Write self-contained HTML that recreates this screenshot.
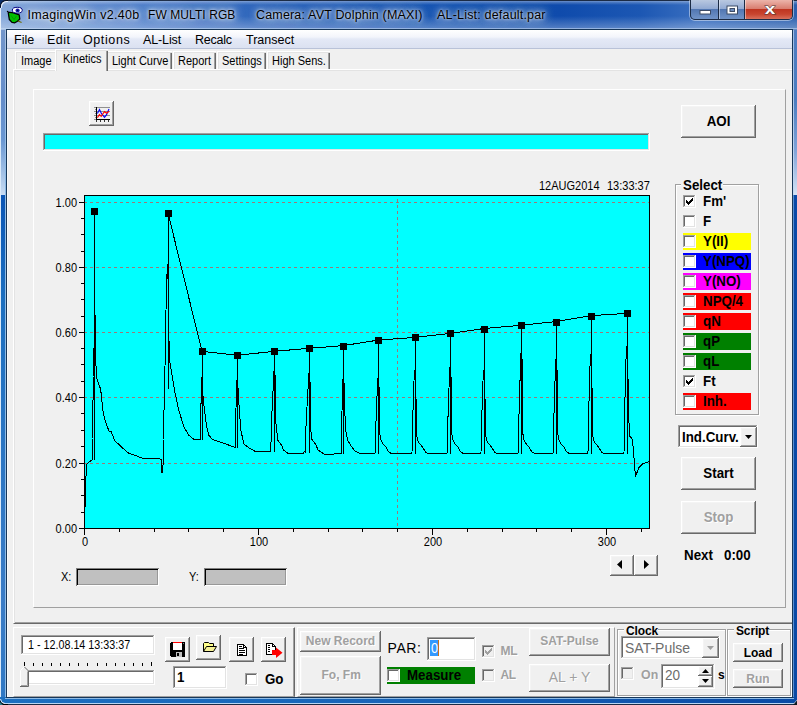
<!DOCTYPE html>
<html lang="en">
<head>
<meta charset="utf-8">
<title>ImagingWin v2.40b</title>
<style>
html,body{margin:0;padding:0}
body{width:797px;height:705px;overflow:hidden;position:relative;background:#f0f0f0;font-family:"Liberation Sans",sans-serif;font-size:12px;color:#000}
div,span.t,svg{position:absolute;box-sizing:border-box}
.t{line-height:1;white-space:pre}
.btn{background:#f0f0f0;box-shadow:inset -1px -1px 0 #696969,inset 1px 1px 0 #fff,inset -2px -2px 0 #a0a0a0,inset 2px 2px 0 #f4f4f4}
.sunk{background:#fff;box-shadow:inset -1px -1px 0 #fff,inset 1px 1px 0 #a0a0a0,inset -2px -2px 0 #e3e3e3,inset 2px 2px 0 #696969}
.cb{width:13px;height:13px}
.dis{background:#f0f0f0}
.grp{border:1px solid #a0a0a0;box-shadow:1px 1px 0 #fff,inset 1px 1px 0 #fff}
.gl{background:#f0f0f0;padding:0}
.gray{color:#a0a0a0;text-shadow:1px 1px 0 #fff}
.tab{background:#f0f0f0;border-left:1px solid #fff;border-top:1px solid #fff;box-shadow:inset 1px 1px 0 #e3e3e3,inset -1px 0 0 #696969,inset -2px 0 0 #a0a0a0}
.ttl{text-shadow:0 0 3px rgba(255,255,255,.9),0 0 7px rgba(255,255,255,.85),0 0 12px rgba(255,255,255,.7),0 0 18px rgba(255,255,255,.55),0 0 24px rgba(255,255,255,.4)}
</style>
</head>
<body>
<!-- window frame -->
<div class="" style="left:0px;top:0px;width:797px;height:30px;background:linear-gradient(to bottom,rgba(255,255,255,.55) 0,rgba(255,255,255,.25) 2px,rgba(255,255,255,0) 5px,rgba(255,255,255,0) 16px,rgba(255,255,255,.28) 28px),linear-gradient(to right,#86a8da 0,#6b95d3 60px,#4a7dca 140px,#2b63bb 260px,#1553b3 420px,#0f4bac 560px,#1c57b3 640px,#3a6fc0 700px,#2b5fae 797px);"></div>
<div class="" style="left:0px;top:28px;width:797px;height:1px;background:rgba(200,220,245,.55)"></div>
<div class="" style="left:0px;top:30px;width:7px;height:668px;background:linear-gradient(to bottom,#7396cb 0,#648dca 70px,#6a97d2 110px,#9dbde4 140px,#c8dcf3 164.9px,#0a55b5 165px,#1c6fc0 270px,#3a7cc6 570px,#2f78c4 100%)"></div>
<div class="" style="left:0px;top:2px;width:1px;height:696px;background:linear-gradient(to bottom,#eef3fa 0,#d9e9f9 120px)"></div>
<div class="" style="left:5px;top:30px;width:1px;height:668px;background:linear-gradient(to bottom,#a9c0e0 0,#8ebbe6 150px)"></div>
<div class="" style="left:6px;top:29px;width:1px;height:669px;background:#17375a"></div>
<div class="" style="left:792px;top:30px;width:5px;height:668px;background:linear-gradient(to bottom,#4f7cc0 0,#4a7dc0 70px,#7fa3d8 120px,#d5e3f5 164.9px,#0a4aa8 165px,#0a4aa5 100%)"></div>
<div class="" style="left:793px;top:30px;width:1px;height:668px;background:linear-gradient(to bottom,#9fbbe2 0,#c5d8f0 164.9px,#5b8fd0 165px,#5b8fd0 100%)"></div>
<div class="" style="left:792px;top:29px;width:1px;height:669px;background:#17375a"></div>
<div class="" style="left:7px;top:30px;width:1px;height:667px;background:#fafafa"></div>
<div class="" style="left:6px;top:29px;width:787px;height:1px;background:#17375a"></div>
<div class="" style="left:0px;top:697px;width:797px;height:8px;background:linear-gradient(to right,#1c6fc0 0,#1864b8 50%,#0a4aa5 100%)"></div>
<div class="" style="left:6px;top:697px;width:787px;height:1px;background:#17375a"></div>
<div class="" style="left:5px;top:698px;width:789px;height:1px;background:#8ebbe6"></div>
<div class="" style="left:0px;top:703px;width:797px;height:1px;background:#b9d6f3"></div>
<div class="" style="left:0px;top:704px;width:797px;height:1px;background:#1b2b45"></div>
<div class="" style="left:0px;top:0px;width:797px;height:1px;background:#1b2b45"></div>
<svg style="left:0;top:0" width="8" height="8" viewBox="0 0 8 8"><path d="M0 0H8V1H6A5 5 0 0 0 1 6V8H0Z" fill="#0b2f6b"/><path d="M0 7V6A6 6 0 0 1 6 0H8V1H6.500A5.500 5.500 0 0 0 1 6.500V7Z" fill="#0a1020"/><path d="M1 8V6.500A5.500 5.500 0 0 1 6.500 1H8V2H7A5 5 0 0 0 2 7V8Z" fill="#e6eefa"/></svg>
<svg style="left:0;top:697px" width="8" height="8" viewBox="0 697 8 8"><path d="M0 705V699A5 5 0 0 0 5 704H8V705Z" fill="#000"/><path d="M0 705V702L3 705Z" fill="#2a7a8a"/><path d="M0.500 699A5 5 0 0 0 5 703.500" stroke="#dbe9f8" stroke-width="1" fill="none"/></svg>
<svg style="left:4px;top:3px" width="24" height="23" viewBox="4 3 24 23">
<path d="M8.200 12.200L13.500 12.800L19.200 14.800L19.800 19L17.500 21.200L14.800 22.800L12 22.400L9.300 19.500Z" fill="#00c000" stroke="#000" stroke-width="1.300" stroke-linejoin="round"/>
<path d="M11 15.500L14 19.500L16.500 16" stroke="#009000" stroke-width=".8" fill="none"/>
<path d="M18 21L21.600 22.600" stroke="#6b6b00" stroke-width="1.100"/>
<circle cx="7.500" cy="11.400" r=".7" fill="#000"/>
<ellipse cx="17.300" cy="10.200" rx="5" ry="2.900" fill="#fff" stroke="#000080" stroke-width="1"/>
<ellipse cx="17.600" cy="10.400" rx="2.100" ry="1.900" fill="#1a1ab0"/>
<circle cx="17.600" cy="10.400" r=".8" fill="#000040"/>
</svg>
<!-- title -->
<span class="t ttl" style="left:27.5px;top:9px;font-size:12.5px;letter-spacing:0.29px;">ImagingWin v2.40b</span>
<span class="t ttl" style="left:148px;top:9px;font-size:12px;letter-spacing:0.08px;">FW MULTI RGB</span>
<span class="t ttl" style="left:256px;top:9px;font-size:12.5px;letter-spacing:0.17px;">Camera: AVT Dolphin (MAXI)</span>
<span class="t ttl" style="left:437px;top:9px;font-size:12.5px;letter-spacing:0.19px;">AL-List: default.par</span>
<!-- caption buttons -->
<div class="" style="left:690px;top:0px;width:103px;height:20px;border-radius:0 0 5px 5px;border:1px solid #1b2b45;border-top:none;box-shadow:0 0 0 1px rgba(255,255,255,.45);background:linear-gradient(to bottom,#b9c8e0 0,#93abd3 45%,#5277b2 50%,#7194c8 100%)"></div>
<div class="" style="left:745px;top:0px;width:47px;height:19px;border-radius:0 0 4px 0;background:linear-gradient(to bottom,#ecb4aa 0,#d97e70 45%,#bf3521 50%,#c9452f 75%,#d8705c 100%)"></div>
<div class="" style="left:718px;top:0px;width:1px;height:19px;background:#1b2b45"></div>
<div class="" style="left:719px;top:0px;width:1px;height:19px;background:rgba(255,255,255,.45)"></div>
<div class="" style="left:744px;top:0px;width:1px;height:19px;background:#1b2b45"></div>
<div class="" style="left:745px;top:0px;width:1px;height:19px;background:rgba(255,255,255,.45)"></div>
<svg style="left:690px;top:0" width="103" height="20" viewBox="690 0 103 20">
<rect x="700" y="10.5" width="10.5" height="3.5" fill="#fff" stroke="#3d4c66" stroke-width="1"/>
<rect x="727" y="6" width="10.5" height="8" fill="#fff" stroke="#3d4c66" stroke-width="1"/>
<rect x="730" y="8.5" width="4.500" height="3" fill="#6f8fc0" stroke="#3d4c66" stroke-width="1"/>
<text transform="translate(770 14.2) scale(1.22 1)" font-family="Liberation Sans, sans-serif" font-weight="bold" font-size="15.500" text-anchor="middle" fill="#fff" stroke="#4a3636" stroke-width=".9" paint-order="stroke">x</text>
</svg>
<!-- menu bar -->
<div class="" style="left:7px;top:30px;width:785px;height:19px;background:linear-gradient(to bottom,#fff 0,#f3f5fb 7px,#e4e9f6 9px,#dbe1f1 18px);border-bottom:1px solid #b9c2d8"></div>
<span class="t" style="left:14px;top:34px;font-size:12.5px;">File</span>
<span class="t" style="left:47px;top:34px;font-size:12.5px;letter-spacing:0.5px;">Edit</span>
<span class="t" style="left:83px;top:34px;font-size:12.5px;letter-spacing:0.6px;">Options</span>
<span class="t" style="left:143px;top:34px;font-size:12.5px;letter-spacing:-0.13px;">AL-List</span>
<span class="t" style="left:195px;top:34px;font-size:12.5px;letter-spacing:-0.25px;">Recalc</span>
<span class="t" style="left:246px;top:34px;font-size:12.5px;">Transect</span>
<!-- tab control -->
<div class="" style="left:13px;top:69px;width:779px;height:555px;border-left:1px solid #fff;border-top:1px solid #fff;border-bottom:1px solid #696969;box-shadow:inset 1px 1px 0 #e3e3e3,inset 0 -1px 0 #a0a0a0"></div>
<div class="tab" style="left:15px;top:51px;width:42px;height:18px;"></div>
<span class="t" style="left:21px;top:55px;font-size:12px;transform:scaleX(0.917);transform-origin:0 0;">Image</span>
<div class="tab" style="left:106px;top:51px;width:66px;height:18px;"></div>
<span class="t" style="left:112px;top:55px;font-size:12px;transform:scaleX(0.917);transform-origin:0 0;">Light Curve</span>
<div class="tab" style="left:173px;top:51px;width:43px;height:18px;"></div>
<span class="t" style="left:178px;top:55px;font-size:12px;transform:scaleX(0.917);transform-origin:0 0;">Report</span>
<div class="tab" style="left:217px;top:51px;width:49px;height:18px;"></div>
<span class="t" style="left:222px;top:55px;font-size:12px;transform:scaleX(0.917);transform-origin:0 0;">Settings</span>
<div class="tab" style="left:267px;top:51px;width:63px;height:18px;"></div>
<span class="t" style="left:272px;top:55px;font-size:12px;transform:scaleX(0.917);transform-origin:0 0;">High Sens.</span>
<div class="tab" style="left:55px;top:49px;width:53px;height:22px;box-shadow:inset 1px 1px 0 #e3e3e3,inset -1px 0 0 #696969,inset -2px 0 0 #a0a0a0"></div>
<div class="" style="left:57px;top:69px;width:49px;height:2px;background:#f0f0f0"></div>
<span class="t" style="left:63px;top:53px;font-size:12px;transform:scaleX(0.917);transform-origin:0 0;">Kinetics</span>
<div class="" style="left:33px;top:89px;width:753px;height:519px;border-left:1px solid #fff;border-top:1px solid #fff;border-right:1px solid #a0a0a0;border-bottom:1px solid #a0a0a0"></div>
<!-- chart toolbar -->
<div class="btn" style="left:89px;top:101px;width:25px;height:25px;"></div>
<svg style="left:93px;top:105px" width="18" height="18" viewBox="93 105 18 18">
<path d="M94 107.500H110M94 111.500H110M94 115.500H110M95 109.500H96M95 113.500H96M95 117.500H96M94 119.500H96" stroke="#909090" stroke-width="1" fill="none" shape-rendering="crispEdges"/>
<path d="M96.500 107V120M96 119.500H110" stroke="#000" stroke-width="1" fill="none" shape-rendering="crispEdges"/>
<path d="M96.500 120v1.500M100.500 120v1.500M104.500 120v1.500M108.500 120v1.500" stroke="#333" stroke-width="1" shape-rendering="crispEdges"/>
<path d="M97.400 113.400L99.500 109.400L101.400 113.400L104.500 117.400L106.600 114.600L109 109" stroke="#00f" stroke-width="1.100" fill="none"/>
<path d="M97.400 117.600L99.500 114.600L101.200 116.300L104.500 111.500L106.600 113.200L109 111.300" stroke="#f00" stroke-width="1.100" fill="none"/>
</svg>
<div class="sunk" style="left:43px;top:133px;width:607px;height:18px;background:#0ff"></div>
<!-- kinetics chart -->
<svg style="left:40px;top:175px" width="625" height="385" viewBox="40 175 625 385">
<rect x="84" y="195" width="566" height="334" fill="#0ff"/>
<path d="M84 202.5H649" stroke="#9c7878" stroke-width="1" stroke-dasharray="3 3" shape-rendering="crispEdges"/>
<path d="M84 267.5H649" stroke="#9c7878" stroke-width="1" stroke-dasharray="3 3" shape-rendering="crispEdges"/>
<path d="M84 332.5H649" stroke="#9c7878" stroke-width="1" stroke-dasharray="3 3" shape-rendering="crispEdges"/>
<path d="M84 397.5H649" stroke="#9c7878" stroke-width="1" stroke-dasharray="3 3" shape-rendering="crispEdges"/>
<path d="M84 463.5H649" stroke="#9c7878" stroke-width="1" stroke-dasharray="3 3" shape-rendering="crispEdges"/>
<path d="M397.5 195V528" stroke="#9c7878" stroke-width="1" stroke-dasharray="3 3" stroke-dashoffset="2" shape-rendering="crispEdges"/>
<path d="M79 202.5H84M79 267.5H84M79 332.5H84M79 397.5H84M79 463.5H84M79 528.5H84M81 218.5H84M81 234.5H84M81 251.5H84M81 283.5H84M81 299.5H84M81 316.5H84M81 348.5H84M81 364.5H84M81 381.5H84M81 413.5H84M81 430.5H84M81 446.5H84M81 479.5H84M81 495.5H84M81 512.5H84M84.5 529V535M119.5 529V532M154.5 529V532M188.5 529V532M223.5 529V532M258.5 529V535M293.5 529V532M328.5 529V532M362.5 529V532M397.5 529V532M432.5 529V535M467.5 529V532M502.5 529V532M536.5 529V532M571.5 529V532M606.5 529V535M641.5 529V532" stroke="#000" stroke-width="1" shape-rendering="crispEdges"/>
<path d="M84.0 528.0 L85.0 507.0 L86.0 476.0 L87.0 464.0 L89.0 462.0 L92.0 460.0 L92.0 439.0 L93.0 400.0 L93.0 377.0 L94.0 348.0 L94.6 330.0 L95.0 313.0 L95.4 348.0 L96.4 377.0 L100.7 389.5 L103.2 412.7 L105.0 420.0 L108.9 431.0 L111.4 432.0 L114.5 440.3 L121.4 447.0 L129.0 453.5 L134.0 455.0 L142.0 458.0 L156.5 458.4 L161.5 459.4 L162.0 472.6 L163.0 465.0 L163.0 440.0 L164.5 396.0 L165.5 336.0 L166.5 284.0 L167.5 264.0 L168.7 300.0 L169.0 340.0 L169.5 360.0 L170.3 365.0 L175.0 392.7 L178.8 410.3 L183.8 426.6 L188.9 435.4 L193.9 439.2 L199.4 439.2 L200.4 439.2 L200.6 420.8 L201.0 403.5 L201.0 385.1 L201.4 377.7 L202.6 379.7 L203.0 396.1 L203.9 405.3 L206.4 425.4 L208.9 435.4 L212.7 439.7 L220.2 442.2 L226.5 444.2 L232.8 446.7 L234.5 447.2 L235.2 447.3 L235.4 427.4 L236.0 408.8 L236.3 389.0 L236.7 381.0 L237.9 383.0 L238.3 400.9 L239.0 405.3 L240.8 430.4 L244.1 444.2 L249.1 447.9 L255.4 451.5 L269.2 451.5 L270.5 451.0 L270.9 451.5 L271.2 427.9 L272.3 405.8 L273.4 382.2 L273.8 372.7 L275.0 374.7 L275.4 396.3 L275.9 422.8 L277.9 440.4 L281.7 445.4 L283.5 450.0 L288.0 453.5 L303.0 453.5 L304.3 451.7 L305.5 452.0 L305.9 428.6 L307.0 406.8 L308.3 383.4 L308.7 374.0 L309.9 376.0 L310.3 397.4 L310.6 427.9 L311.8 439.2 L315.6 444.2 L318.1 450.0 L324.4 454.2 L330.6 454.5 L340.7 453.0 L341.1 453.3 L341.3 431.3 L342.0 410.8 L342.4 388.8 L342.8 380.0 L344.0 382.0 L344.4 402.0 L345.7 430.4 L347.7 440.4 L350.7 445.4 L354.5 450.5 L359.5 453.5 L362.3 454.0 L373.3 453.5 L375.3 453.0 L375.6 430.8 L376.5 410.1 L377.3 387.9 L377.7 379.0 L378.9 381.0 L379.3 401.2 L379.5 432.0 L380.8 440.0 L382.8 443.5 L385.8 447.0 L388.8 452.0 L391.8 453.7 L399.0 454.0 L410.0 453.5 L412.0 453.0 L412.3 428.4 L413.2 405.4 L414.0 380.8 L414.4 371.0 L415.6 373.0 L416.0 395.6 L416.2 432.0 L417.5 440.0 L419.5 443.5 L422.5 447.0 L425.5 452.0 L428.5 453.7 L434.3 454.0 L445.3 453.5 L447.3 453.0 L447.6 427.5 L448.5 403.7 L449.3 378.2 L449.7 368.0 L450.9 370.0 L451.3 393.5 L451.5 432.0 L452.8 440.0 L454.8 443.5 L457.8 447.0 L460.8 452.0 L463.8 453.7 L468.0 454.0 L479.0 453.5 L481.0 453.0 L481.3 428.4 L482.2 405.4 L483.0 380.8 L483.4 371.0 L484.6 373.0 L485.0 395.6 L485.2 432.0 L486.5 440.0 L488.5 443.5 L491.5 447.0 L494.5 452.0 L497.5 453.7 L505.4 454.0 L516.4 453.5 L518.4 453.0 L518.7 423.5 L519.6 396.0 L520.4 366.5 L520.8 354.7 L522.0 356.7 L522.4 384.2 L522.6 432.0 L523.9 440.0 L525.9 443.5 L528.9 447.0 L531.9 452.0 L534.9 453.7 L540.3 454.0 L551.3 453.5 L553.3 453.0 L553.6 425.1 L554.5 399.1 L555.3 371.2 L555.7 360.0 L556.9 362.0 L557.3 387.9 L557.5 432.0 L558.8 440.0 L560.8 443.5 L563.8 447.0 L566.8 452.0 L569.8 453.7 L575.0 454.0 L586.0 453.5 L588.0 453.0 L588.3 423.5 L589.2 395.9 L590.0 366.4 L590.4 354.6 L591.6 356.6 L592.0 384.1 L592.2 432.0 L593.5 440.0 L595.5 443.5 L598.5 447.0 L601.5 452.0 L604.5 453.7 L611.0 454.0 L622.0 453.5 L624.0 453.0 L624.3 421.1 L625.2 391.3 L626.0 359.4 L626.4 346.6 L627.6 348.6 L628.0 378.5 L629.3 435.5 L632.5 439.5 L633.9 457.0 L635.5 476.7 L638.7 467.8 L642.8 463.7 L648.0 461.9 L649.0 461.7" stroke="#000" stroke-width="1" fill="none" stroke-linejoin="miter" shape-rendering="crispEdges"/>
<path d="M94.5 211.0V460M168.5 213.0V389M202.5 351.3V440M237.5 355.3V448M274.5 351.3V452M309.5 348.3V452.5M343.5 345.6V454M378.5 340.1V454M415.5 337.4V454M450.5 333.4V454M484.5 328.5V454M521.5 325.3V454M556.5 321.5V454M591.5 315.6V454M627.5 313.4V454" stroke="#000" stroke-width="1" fill="none" shape-rendering="crispEdges"/>
<path d="M168.0 213.0 L202.0 351.3 L237.3 355.3 L274.4 351.3 L309.3 348.3 L343.4 345.6 L378.3 340.1 L415.0 337.4 L450.3 333.4 L484.0 328.5 L521.4 325.3 L556.3 321.5 L591.0 315.6 L627.0 313.4" stroke="#000" stroke-width="1" fill="none" shape-rendering="crispEdges"/>
<rect x="91" y="208" width="7" height="7" fill="#000" shape-rendering="crispEdges"/>
<rect x="165" y="210" width="7" height="7" fill="#000" shape-rendering="crispEdges"/>
<rect x="199" y="348" width="7" height="7" fill="#000" shape-rendering="crispEdges"/>
<rect x="234" y="352" width="7" height="7" fill="#000" shape-rendering="crispEdges"/>
<rect x="271" y="348" width="7" height="7" fill="#000" shape-rendering="crispEdges"/>
<rect x="306" y="345" width="7" height="7" fill="#000" shape-rendering="crispEdges"/>
<rect x="340" y="343" width="7" height="7" fill="#000" shape-rendering="crispEdges"/>
<rect x="375" y="337" width="7" height="7" fill="#000" shape-rendering="crispEdges"/>
<rect x="412" y="334" width="7" height="7" fill="#000" shape-rendering="crispEdges"/>
<rect x="447" y="330" width="7" height="7" fill="#000" shape-rendering="crispEdges"/>
<rect x="481" y="326" width="7" height="7" fill="#000" shape-rendering="crispEdges"/>
<rect x="518" y="322" width="7" height="7" fill="#000" shape-rendering="crispEdges"/>
<rect x="553" y="319" width="7" height="7" fill="#000" shape-rendering="crispEdges"/>
<rect x="588" y="313" width="7" height="7" fill="#000" shape-rendering="crispEdges"/>
<rect x="624" y="310" width="7" height="7" fill="#000" shape-rendering="crispEdges"/>
<path d="M84.5 195.5H649.5V528.5H84.500Z" stroke="#000" stroke-width="1" fill="none" shape-rendering="crispEdges"/>
</svg>
<span class="t" style="left:17px;width:60px;text-align:right;top:197px;font-size:12px;transform:scaleX(0.917);transform-origin:100% 0">1.00</span>
<span class="t" style="left:17px;width:60px;text-align:right;top:262px;font-size:12px;transform:scaleX(0.917);transform-origin:100% 0">0.80</span>
<span class="t" style="left:17px;width:60px;text-align:right;top:327px;font-size:12px;transform:scaleX(0.917);transform-origin:100% 0">0.60</span>
<span class="t" style="left:17px;width:60px;text-align:right;top:392px;font-size:12px;transform:scaleX(0.917);transform-origin:100% 0">0.40</span>
<span class="t" style="left:17px;width:60px;text-align:right;top:458px;font-size:12px;transform:scaleX(0.917);transform-origin:100% 0">0.20</span>
<span class="t" style="left:17px;width:60px;text-align:right;top:523px;font-size:12px;transform:scaleX(0.917);transform-origin:100% 0">0.00</span>
<span class="t" style="left:55px;width:60px;text-align:center;top:536px;font-size:12px;transform:scaleX(0.917);transform-origin:50% 0">0</span>
<span class="t" style="left:229px;width:60px;text-align:center;top:536px;font-size:12px;transform:scaleX(0.917);transform-origin:50% 0">100</span>
<span class="t" style="left:403px;width:60px;text-align:center;top:536px;font-size:12px;transform:scaleX(0.917);transform-origin:50% 0">200</span>
<span class="t" style="left:577px;width:60px;text-align:center;top:536px;font-size:12px;transform:scaleX(0.917);transform-origin:50% 0">300</span>
<span class="t" style="left:539px;top:180px;font-size:12px;transform:scaleX(0.917);transform-origin:0 0;">12AUG2014</span>
<span class="t" style="left:607px;top:180px;font-size:12px;transform:scaleX(0.917);transform-origin:0 0;">13:33:37</span>
<span class="t" style="left:61px;top:571px;font-size:12px;transform:scaleX(0.917);transform-origin:0 0;">X:</span>
<div class="" style="left:76px;top:568px;width:83px;height:18px;background:#c0c0c0;box-shadow:inset 1px 1px 0 #808080,inset -1px -1px 0 #fff,inset 2px 2px 0 #000,inset -2px -2px 0 #989898"></div>
<span class="t" style="left:189px;top:571px;font-size:12px;transform:scaleX(0.917);transform-origin:0 0;">Y:</span>
<div class="" style="left:204px;top:568px;width:83px;height:18px;background:#c0c0c0;box-shadow:inset 1px 1px 0 #808080,inset -1px -1px 0 #fff,inset 2px 2px 0 #000,inset -2px -2px 0 #989898"></div>
<div class="btn" style="left:610px;top:555px;width:24px;height:21px;"><svg style="left:6px;top:5px" width="8" height="9" viewBox="0 0 8 9"><path d="M6 0V9L1 4.500Z" fill="#000"/></svg></div>
<div class="btn" style="left:634px;top:555px;width:24px;height:21px;"><svg style="left:9px;top:5px" width="8" height="9" viewBox="0 0 8 9"><path d="M1 0V9L6 4.500Z" fill="#000"/></svg></div>
<!-- right panel -->
<div class="btn" style="left:681px;top:105px;width:75px;height:33px;"><span class="t" style="top:9px;font-size:14px;font-weight:bold;transform:scaleX(0.952);left:0;width:75px;text-align:center;">AOI</span></div>
<div class="grp" style="left:675px;top:184px;width:84px;height:231px;"></div>
<div class="gl" style="left:681px;top:178px;width:42px;height:14px;"></div>
<span class="t" style="left:683px;top:178px;font-size:14px;font-weight:bold;transform:scaleX(0.952);transform-origin:0 0;">Select</span>
<div class="sunk cb" style="left:683px;top:195px;width:13px;height:13px;"><svg style="left:3px;top:3px" width="7" height="7" viewBox="0 0 7 7" shape-rendering="crispEdges"><path d="M0 2v3M1 3v3M2 4v3M3 3v3M4 2v3M5 1v3M6 0v3" stroke="#000" stroke-width="1" transform="translate(.5 0)"/></svg></div>
<span class="t" style="left:702.5px;top:194px;font-size:14px;font-weight:bold;transform:scaleX(0.952);transform-origin:0 0;">Fm'</span>
<div class="sunk cb" style="left:683px;top:215px;width:13px;height:13px;"></div>
<span class="t" style="left:702.5px;top:214px;font-size:14px;font-weight:bold;transform:scaleX(0.952);transform-origin:0 0;">F</span>
<div class="" style="left:683px;top:233px;width:68px;height:17px;background:#ff0"></div>
<div class="sunk cb" style="left:683px;top:235px;width:13px;height:13px;"></div>
<span class="t" style="left:702.5px;top:234px;font-size:14px;font-weight:bold;transform:scaleX(0.952);transform-origin:0 0;">Y(II)</span>
<div class="" style="left:683px;top:253px;width:68px;height:17px;background:#00f"></div>
<div class="sunk cb" style="left:683px;top:255px;width:13px;height:13px;"></div>
<span class="t" style="left:702.5px;top:254px;font-size:14px;font-weight:bold;transform:scaleX(0.952);transform-origin:0 0;">Y(NPQ)</span>
<div class="" style="left:683px;top:273px;width:68px;height:17px;background:#f0f"></div>
<div class="sunk cb" style="left:683px;top:275px;width:13px;height:13px;"></div>
<span class="t" style="left:702.5px;top:274px;font-size:14px;font-weight:bold;transform:scaleX(0.952);transform-origin:0 0;">Y(NO)</span>
<div class="" style="left:683px;top:293px;width:68px;height:17px;background:#f00"></div>
<div class="sunk cb" style="left:683px;top:295px;width:13px;height:13px;"></div>
<span class="t" style="left:702.5px;top:294px;font-size:14px;font-weight:bold;transform:scaleX(0.952);transform-origin:0 0;">NPQ/4</span>
<div class="" style="left:683px;top:313px;width:68px;height:17px;background:#f00"></div>
<div class="sunk cb" style="left:683px;top:315px;width:13px;height:13px;"></div>
<span class="t" style="left:702.5px;top:314px;font-size:14px;font-weight:bold;transform:scaleX(0.952);transform-origin:0 0;">qN</span>
<div class="" style="left:683px;top:333px;width:68px;height:17px;background:#008000"></div>
<div class="sunk cb" style="left:683px;top:335px;width:13px;height:13px;"></div>
<span class="t" style="left:702.5px;top:334px;font-size:14px;font-weight:bold;transform:scaleX(0.952);transform-origin:0 0;">qP</span>
<div class="" style="left:683px;top:353px;width:68px;height:17px;background:#008000"></div>
<div class="sunk cb" style="left:683px;top:355px;width:13px;height:13px;"></div>
<span class="t" style="left:702.5px;top:354px;font-size:14px;font-weight:bold;transform:scaleX(0.952);transform-origin:0 0;">qL</span>
<div class="sunk cb" style="left:683px;top:375px;width:13px;height:13px;"><svg style="left:3px;top:3px" width="7" height="7" viewBox="0 0 7 7" shape-rendering="crispEdges"><path d="M0 2v3M1 3v3M2 4v3M3 3v3M4 2v3M5 1v3M6 0v3" stroke="#000" stroke-width="1" transform="translate(.5 0)"/></svg></div>
<span class="t" style="left:702.5px;top:374px;font-size:14px;font-weight:bold;transform:scaleX(0.952);transform-origin:0 0;">Ft</span>
<div class="" style="left:683px;top:393px;width:68px;height:17px;background:#f00"></div>
<div class="sunk cb" style="left:683px;top:395px;width:13px;height:13px;"></div>
<span class="t" style="left:702.5px;top:394px;font-size:14px;font-weight:bold;transform:scaleX(0.952);transform-origin:0 0;">Inh.</span>
<div class="sunk" style="left:678px;top:425px;width:80px;height:23px;"></div>
<div class="btn" style="left:740px;top:427px;width:17px;height:20px;"><svg style="left:5px;top:8px" width="7" height="4" viewBox="0 0 7 4"><path d="M0 0H7L3.500 4Z" fill="#000"/></svg></div>
<span class="t" style="left:681.5px;top:430px;font-size:14px;font-weight:bold;transform:scaleX(0.952);transform-origin:0 0;">Ind.Curv.</span>
<div class="btn" style="left:681px;top:457px;width:75px;height:33px;"><span class="t" style="top:9px;font-size:14px;font-weight:bold;transform:scaleX(0.952);left:0;width:75px;text-align:center;">Start</span></div>
<div class="btn" style="left:681px;top:501px;width:75px;height:33px;"><span class="t gray" style="top:9px;font-size:14px;font-weight:bold;transform:scaleX(0.952);left:0;width:75px;text-align:center;">Stop</span></div>
<span class="t" style="left:683.5px;top:548px;font-size:14px;font-weight:bold;transform:scaleX(0.952);transform-origin:0 0;">Next</span>
<span class="t" style="left:723.5px;top:548px;font-size:14px;font-weight:bold;transform:scaleX(0.952);transform-origin:0 0;">0:00</span>
<!-- bottom: record panel -->
<div class="" style="left:13px;top:627px;width:282px;height:70px;border-left:1px solid #fff;border-top:1px solid #fff;border-right:1px solid #696969;border-bottom:1px solid #a0a0a0;box-shadow:inset -1px 0 0 #a0a0a0"></div>
<div class="sunk" style="left:21px;top:635px;width:134px;height:20px;"></div>
<span class="t" style="left:27.5px;top:639px;font-size:12px;transform:scaleX(0.895);transform-origin:0 0;">1 - 12.08.14 13:33:37</span>
<svg style="left:21px;top:662px" width="134" height="5" viewBox="21 662 134 5" shape-rendering="crispEdges"><rect x="24" y="662" width="1" height="4"/><rect x="33" y="663" width="1" height="3"/><rect x="42" y="663" width="1" height="3"/><rect x="51" y="663" width="1" height="3"/><rect x="60" y="663" width="1" height="3"/><rect x="69" y="663" width="1" height="3"/><rect x="78" y="663" width="1" height="3"/><rect x="87" y="663" width="1" height="3"/><rect x="97" y="663" width="1" height="3"/><rect x="106" y="663" width="1" height="3"/><rect x="115" y="663" width="1" height="3"/><rect x="124" y="663" width="1" height="3"/><rect x="133" y="663" width="1" height="3"/><rect x="142" y="663" width="1" height="3"/><rect x="151" y="662" width="1" height="4"/></svg>
<div class="sunk" style="left:21px;top:670px;width:134px;height:15px;"></div>
<svg style="left:20px;top:666px" width="10" height="22" viewBox="20 666 10 22">
<path d="M20 671L24.500 666.500L29 671V687H20Z" fill="#f0f0f0"/>
<path d="M24.500 667L28.500 671V686.500H20" fill="none" stroke="#696969" stroke-width="1"/>
<path d="M27.500 671.500V685.500H21" fill="none" stroke="#a0a0a0" stroke-width="1"/>
<path d="M20.500 686V670.500L24.200 666.800" fill="none" stroke="#fff" stroke-width="1"/>
</svg>
<div class="btn" style="left:165px;top:637px;width:25px;height:25px;"></div>
<svg style="left:169px;top:641px" width="18" height="17" viewBox="169 641 18 17" shape-rendering="crispEdges">
<path d="M171 642H184L185 643V656L184 657H171L170 656V643Z" fill="#000"/>
<rect x="173" y="643" width="9" height="7" fill="#fff"/>
<rect x="173" y="642" width="9" height="1" fill="#f00"/>
<rect x="176" y="652" width="6" height="5" fill="#c0c0c0"/>
<rect x="177" y="653" width="2" height="3" fill="#000"/>
<rect x="183" y="643" width="1" height="1" fill="#808080"/>
</svg>
<div class="btn" style="left:196px;top:635px;width:25px;height:25px;"></div>
<svg style="left:200px;top:640px" width="18" height="14" viewBox="200 640 18 14">
<path d="M203.500 651.500V643.500L204.500 642.500H208.500L209.500 643.500H213.500V647" fill="#ffff8a" stroke="#000" stroke-width="1"/>
<path d="M203.500 651.500L206.500 646.500H216.500L213.500 651.500Z" fill="#f6f296" stroke="#000" stroke-width="1"/>
</svg>
<div class="btn" style="left:229px;top:637px;width:25px;height:25px;"></div>
<svg style="left:235px;top:642px" width="14" height="16" viewBox="235 642 14 16" shape-rendering="crispEdges">
<path d="M237.500 644.500H243.500L246.500 647.500V655.500H237.500Z" fill="#fff" stroke="#000" stroke-width="1"/>
<path d="M243.500 644.500V647.500H246.500" fill="none" stroke="#000" stroke-width="1"/>
<path d="M239 646.500H242M239 648.500H244M239 650.500H245M239 652.500H245M239 654.500H243" stroke="#000" stroke-width="1"/>
</svg>
<div class="btn" style="left:261px;top:637px;width:25px;height:25px;"></div>
<svg style="left:264px;top:641px" width="20" height="19" viewBox="264 641 20 19">
<path d="M266.500 643.500H272.500L275.500 646.500V654.500H266.500Z" fill="#fff" stroke="#000" stroke-width="1" shape-rendering="crispEdges"/>
<path d="M272.500 643.500V646.500H275.500" fill="none" stroke="#000" stroke-width="1" shape-rendering="crispEdges"/>
<path d="M268 645.500H270M268 647.500H270M268 649.500H270M268 651.500H270" stroke="#000" stroke-width="1" shape-rendering="crispEdges"/>
<path d="M272 650H276V647.500L282.500 652.700L276 658V655H272Z" fill="#f00"/>
</svg>
<div class="sunk" style="left:173px;top:666px;width:54px;height:23px;"></div>
<span class="t" style="left:177px;top:670px;font-size:14px;font-weight:bold;transform:scaleX(0.952);transform-origin:0 0;">1</span>
<div class="sunk cb" style="left:245px;top:673px;width:13px;height:13px;"></div>
<span class="t" style="left:264.5px;top:672px;font-size:14px;font-weight:bold;transform:scaleX(0.952);transform-origin:0 0;">Go</span>
<!-- bottom: measure panel -->
<div class="" style="left:297px;top:627px;width:318px;height:70px;border-left:1px solid #fff;border-top:1px solid #fff;border-right:1px solid #a0a0a0;border-bottom:1px solid #a0a0a0"></div>
<div class="btn" style="left:300px;top:631px;width:81px;height:21px;"><span class="t gray" style="top:4px;font-size:12px;font-weight:bold;left:0;width:81px;text-align:center;">New Record</span></div>
<div class="btn" style="left:300px;top:656px;width:81px;height:39px;"><span class="t gray" style="top:13px;font-size:12px;font-weight:bold;left:21.5px;">Fo, Fm</span></div>
<span class="t" style="left:387.5px;top:641px;font-size:14px;letter-spacing:0.6px;">PAR:</span>
<div class="sunk" style="left:427px;top:637px;width:49px;height:24px;"></div>
<div class="" style="left:430px;top:640px;width:8px;height:16px;background:#39f"></div>
<span class="t" style="left:430.5px;top:641px;font-size:14px;color:#fff;transform:scaleX(0.9);transform-origin:0 0;">0</span>
<div class="" style="left:438px;top:640px;width:1px;height:16px;background:#c87018"></div>
<div class="" style="left:387px;top:667px;width:88px;height:17px;background:#008000"></div>
<div class="sunk cb" style="left:387px;top:669px;width:13px;height:13px;"></div>
<span class="t" style="left:406.5px;top:668px;font-size:14px;font-weight:bold;transform:scaleX(0.952);transform-origin:0 0;">Measure</span>
<div class="sunk cb dis" style="left:482px;top:645px;width:13px;height:13px;"><svg style="left:3px;top:3px" width="7" height="7" viewBox="0 0 7 7" shape-rendering="crispEdges"><path d="M0 2v3M1 3v3M2 4v3M3 3v3M4 2v3M5 1v3M6 0v3" stroke="#a0a0a0" stroke-width="1" transform="translate(.5 0)"/></svg></div>
<span class="t gray" style="left:500.6px;top:645px;font-size:12px;font-weight:bold;letter-spacing:-0.4px;">ML</span>
<div class="sunk cb dis" style="left:482px;top:669px;width:13px;height:13px;"></div>
<span class="t gray" style="left:500.4px;top:669px;font-size:12px;font-weight:bold;letter-spacing:-0.4px;">AL</span>
<div class="btn" style="left:529px;top:628px;width:81px;height:28px;"><span class="t gray" style="top:7px;font-size:12px;font-weight:bold;left:0;width:81px;text-align:center;">SAT-Pulse</span></div>
<div class="btn" style="left:529px;top:664px;width:81px;height:28px;"><span class="t gray" style="top:6px;font-size:14px;left:0;width:81px;text-align:center;">AL + Y</span></div>
<!-- bottom: clock group -->
<div class="grp" style="left:617px;top:629px;width:109px;height:67px;"></div>
<div class="gl" style="left:624px;top:625px;width:34px;height:10px;"></div>
<span class="t" style="left:626px;top:625px;font-size:12px;font-weight:bold;letter-spacing:-0.15px;">Clock</span>
<div class="sunk" style="left:621px;top:636px;width:99px;height:23px;"></div>
<div class="btn" style="left:702px;top:638px;width:17px;height:20px;"><svg style="left:5px;top:8px" width="7" height="4" viewBox="0 0 7 4"><path d="M0 0H7L3.500 4Z" fill="#a0a0a0"/></svg></div>
<span class="t" style="left:625px;top:641px;font-size:14px;color:#6d6d6d;">SAT-Pulse</span>
<div class="sunk cb dis" style="left:621px;top:667px;width:13px;height:13px;"></div>
<span class="t gray" style="left:640.5px;top:668px;font-size:13.33px;font-weight:bold;transform:scaleX(0.93);transform-origin:0 0;">On</span>
<div class="sunk" style="left:661px;top:664px;width:54px;height:25px;"></div>
<span class="t" style="left:664.5px;top:668px;font-size:14px;color:#6d6d6d;transform:scaleX(0.97);transform-origin:0 0;">20</span>
<div class="btn" style="left:698px;top:666px;width:15px;height:10px;"><svg style="left:4px;top:3px" width="7" height="4" viewBox="0 0 7 4"><path d="M0 4H7L3.500 0Z" fill="#000"/></svg></div>
<div class="btn" style="left:698px;top:676px;width:15px;height:11px;"><svg style="left:4px;top:3px" width="7" height="4" viewBox="0 0 7 4"><path d="M0 0H7L3.500 4Z" fill="#000"/></svg></div>
<span class="t" style="left:718px;top:669px;font-size:12px;font-weight:bold;">s</span>
<!-- bottom: script group -->
<div class="grp" style="left:727px;top:629px;width:64px;height:67px;"></div>
<div class="gl" style="left:734px;top:625px;width:35px;height:10px;"></div>
<span class="t" style="left:736px;top:625px;font-size:12px;font-weight:bold;letter-spacing:-0.15px;">Script</span>
<div class="btn" style="left:733px;top:643px;width:50px;height:19px;"><span class="t" style="top:4px;font-size:12px;font-weight:bold;left:0;width:50px;text-align:center;">Load</span></div>
<div class="btn" style="left:733px;top:669px;width:50px;height:19px;"><span class="t gray" style="top:4px;font-size:12px;font-weight:bold;left:0;width:50px;text-align:center;">Run</span></div>
<svg style="left:792px;top:700px" width="5" height="5" viewBox="792 700 5 5"><path d="M797 700.500L793 705H797Z" fill="#101820"/><path d="M797 700L793.500 704" stroke="#b0b8c4" stroke-width=".8"/></svg>
</body>
</html>
